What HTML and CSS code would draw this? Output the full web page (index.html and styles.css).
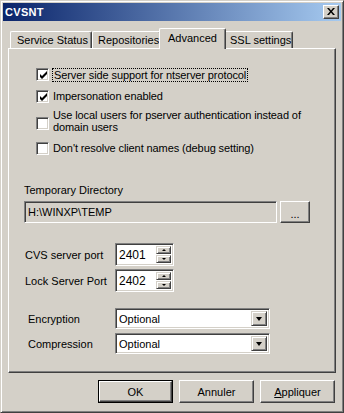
FILE: index.html
```html
<!DOCTYPE html>
<html>
<head>
<meta charset="utf-8">
<title>CVSNT</title>
<link rel="stylesheet" href="styles.css">
</head>
<body>
<div class="window">
  <div class="titlebar">
    <span class="title">CVSNT</span>
    <div class="close"><svg width="8" height="7" viewBox="0 0 8 7"><path d="M0 0h2l2 2.4 2-2.4h2l-3 3.5 3 3.5h-2l-2-2.4-2 2.4h-2l3-3.5z" fill="#000"/></svg></div>
  </div>
  <div class="client">
    <div class="tabs">
      <div class="tab t1">Service Status</div>
      <div class="tab t2">Repositories</div>
      <div class="tab active t3">Advanced</div>
      <div class="tab t4">SSL settings</div>
    </div>
    <div class="panel">
      <div class="checks">
        <div class="check r1"><span class="box"><svg width="9" height="9" viewBox="0 0 9 9"><path d="M1 3v3l2 2 5-5v-3l-5 5z" fill="#000"/></svg></span><span class="label focus">Server side support for ntserver protocol</span></div>
        <div class="check r2"><span class="box"><svg width="9" height="9" viewBox="0 0 9 9"><path d="M1 3v3l2 2 5-5v-3l-5 5z" fill="#000"/></svg></span><span class="label">Impersonation enabled</span></div>
        <div class="check r3"><span class="box"></span><span class="label two">Use local users for pserver authentication instead of<br>domain users</span></div>
        <div class="check r4"><span class="box"></span><span class="label">Don't resolve client names (debug setting)</span></div>
      </div>
      <div class="caption">Temporary Directory</div>
      <div class="dirrow">
        <div class="edit readonly">H:\WINXP\TEMP</div>
        <div class="btn browse">...</div>
      </div>
      <div class="ports">
        <div class="port">
          <span class="plabel">CVS server port</span>
          <div class="edit spin"><span class="val">2401</span>
            <div class="spinbtns"><div class="sbtn"><span class="uparrow"></span></div><div class="sbtn"><span class="downarrow"></span></div></div>
          </div>
        </div>
        <div class="port">
          <span class="plabel">Lock Server Port</span>
          <div class="edit spin"><span class="val">2402</span>
            <div class="spinbtns"><div class="sbtn"><span class="uparrow"></span></div><div class="sbtn"><span class="downarrow"></span></div></div>
          </div>
        </div>
      </div>
      <div class="combos">
        <div class="combo-row">
          <span class="clabel">Encryption</span>
          <div class="edit combo"><span class="val">Optional</span><div class="dropbtn"><span class="droparrow"></span></div></div>
        </div>
        <div class="combo-row">
          <span class="clabel">Compression</span>
          <div class="edit combo"><span class="val">Optional</span><div class="dropbtn"><span class="droparrow"></span></div></div>
        </div>
      </div>
    </div>
    <div class="buttons">
      <div class="default"><div class="btn push">OK</div></div>
      <div class="btn push">Annuler</div>
      <div class="btn push"><span class="u">A</span>ppliquer</div>
    </div>
  </div>
</div>
</body>
</html>
```
FILE: styles.css
```css
html, body {
  margin: 0;
  padding: 0;
  background: #d4d0c8;
}
body {
  font-family: "Liberation Sans", Arial, sans-serif;
  font-size: 11px;
  color: #000;
}
.window {
  width: 344px;
  height: 413px;
  box-sizing: border-box;
  background: #d4d0c8;
  border: 1px solid;
  border-color: #d4d0c8 #404040 #404040 #d4d0c8;
  box-shadow: inset 1px 1px #fff, inset -1px -1px #808080;
  padding: 2px;
  display: flex;
  flex-direction: column;
}
.titlebar {
  height: 18px;
  box-sizing: border-box;
  padding: 0 2px;
  background: linear-gradient(to right, #0a246a, #a6caf0);
  display: flex;
  align-items: center;
  justify-content: space-between;
}
.title {
  color: #fff;
  font-weight: bold;
  font-size: 11px;
  letter-spacing: 0.3px;
}
.close {
  width: 16px;
  height: 14px;
  box-sizing: border-box;
  background: #d4d0c8;
  border: 1px solid;
  border-color: #fff #404040 #404040 #fff;
  box-shadow: inset -1px -1px #808080;
  display: flex;
  align-items: center;
  justify-content: center;
  padding: 0 1px 1px 0;
}
.close svg { display: block; }
.client {
  flex: 1;
  padding: 7px 5px 0 5px;
  display: flex;
  flex-direction: column;
}
.tabs {
  height: 20px;
  display: flex;
  align-items: flex-end;
  padding-left: 2px;
}
.tab {
  height: 17px;
  box-sizing: border-box;
  border-top: 1px solid #fff;
  border-left: 1px solid #fff;
  border-right: 1px solid #404040;
  box-shadow: inset -1px 0 #808080;
  border-radius: 2px 2px 0 0;
  padding-left: 6px;
  line-height: 16px;
  white-space: nowrap;
}
.t1 { width: 82px; }
.t2 { width: 69px; padding-left: 5px; }
.t4 { width: 69px; padding-left: 5px; }
.tab.active {
  width: 67px;
  height: 21px;
  margin: 0 -2px -1px -2px;
  background: #d4d0c8;
  z-index: 1;
  padding-left: 8px;
  line-height: 18px;
}
.panel {
  height: 325px;
  box-sizing: border-box;
  border: 1px solid;
  border-color: #fff #404040 #404040 #fff;
  box-shadow: inset -1px -1px #808080;
  padding: 19px 0 0 15px;
  display: flex;
  flex-direction: column;
}
.checks {
  margin-left: 12px;
  display: flex;
  flex-direction: column;
}
.check {
  display: flex;
  align-items: flex-start;
  line-height: 13px;
}
.box {
  width: 13px;
  height: 13px;
  box-sizing: border-box;
  flex: none;
  background: #fff;
  border: 1px solid;
  border-color: #808080 #fff #fff #808080;
  box-shadow: inset 1px 1px #404040, inset -1px -1px #d4d0c8;
  display: flex;
  align-items: center;
  justify-content: center;
  padding: 1px 0 0 1px;
  margin-right: 4px;
}
.box svg { display: block; }
.label { white-space: nowrap; letter-spacing: -0.1px; }
.label.focus {
  border: 1px dotted #000;
  line-height: 12px;
  padding: 0 1px;
  margin-left: -1px;
}
.r1 { height: 14px; }
.r2 { margin-top: 8px; height: 13px; }
.r3 { margin-top: 6px; height: 24px; }
.r3 .box { margin-top: 8px; }
.label.two { line-height: 12px; }
.r4 { margin-top: 9px; height: 13px; }
.caption {
  margin-top: 29px;
  line-height: 13px;
  height: 13px;
}
.dirrow {
  margin-top: 4px;
  display: flex;
  gap: 3px;
  height: 22px;
}
.edit {
  box-sizing: border-box;
  background: #fff;
  border: 1px solid;
  border-color: #808080 #fff #fff #808080;
  box-shadow: inset 1px 1px #404040, inset -1px -1px #d4d0c8;
  display: flex;
  align-items: center;
}
.edit.readonly {
  width: 253px;
  background: #d4d0c8;
  padding-left: 3px;
}
.btn {
  box-sizing: border-box;
  background: #d4d0c8;
  border: 1px solid;
  border-color: #fff #404040 #404040 #fff;
  box-shadow: inset -1px -1px #808080;
  display: flex;
  align-items: center;
  justify-content: center;
}
.browse {
  width: 30px;
  padding-top: 4px;
}
.ports {
  margin-top: 20px;
  display: flex;
  flex-direction: column;
  gap: 3px;
}
.port, .combo-row {
  display: flex;
  align-items: center;
}
.plabel {
  width: 91px;
  padding-left: 1px;
  box-sizing: border-box;
}
.spin {
  width: 59px;
  height: 23px;
  padding: 2px 2px 2px 3px;
  justify-content: space-between;
  font-size: 12px;
}
.spinbtns {
  width: 15px;
  align-self: stretch;
  display: flex;
  flex-direction: column;
  gap: 1px;
}
.sbtn {
  flex: 1;
  box-sizing: border-box;
  background: #d4d0c8;
  border: 1px solid;
  border-color: #d4d0c8 #404040 #404040 #d4d0c8;
  box-shadow: inset 1px 1px #fff, inset -1px -1px #808080;
  display: flex;
  align-items: center;
  justify-content: center;
}
.uparrow {
  width: 0;
  height: 0;
  border-left: 2px solid transparent;
  border-right: 2px solid transparent;
  border-bottom: 2px solid #000;
}
.downarrow {
  width: 0;
  height: 0;
  border-left: 2px solid transparent;
  border-right: 2px solid transparent;
  border-top: 2px solid #000;
}
.combos {
  margin-top: 16px;
  display: flex;
  flex-direction: column;
  gap: 4px;
}
.clabel {
  width: 91px;
  padding-left: 4px;
  box-sizing: border-box;
}
.combo {
  width: 155px;
  height: 21px;
  padding: 2px 2px 2px 3px;
  justify-content: space-between;
}
.dropbtn {
  width: 16px;
  align-self: stretch;
  box-sizing: border-box;
  background: #d4d0c8;
  border: 1px solid;
  border-color: #d4d0c8 #404040 #404040 #d4d0c8;
  box-shadow: inset 1px 1px #fff, inset -1px -1px #808080;
  display: flex;
  align-items: center;
  justify-content: center;
}
.droparrow {
  width: 0;
  height: 0;
  border-left: 3.5px solid transparent;
  border-right: 3.5px solid transparent;
  border-top: 4px solid #000;
}
.buttons {
  margin-top: 7px;
  display: flex;
  justify-content: flex-end;
  gap: 6px;
  padding-right: 1px;
}
.push {
  width: 75px;
  height: 23px;
}
.default {
  border: 1px solid #000;
  width: 75px;
  height: 23px;
  box-sizing: border-box;
  display: flex;
}
.default .push {
  width: 73px;
  height: 21px;
}
.u { text-decoration: underline; }
```
